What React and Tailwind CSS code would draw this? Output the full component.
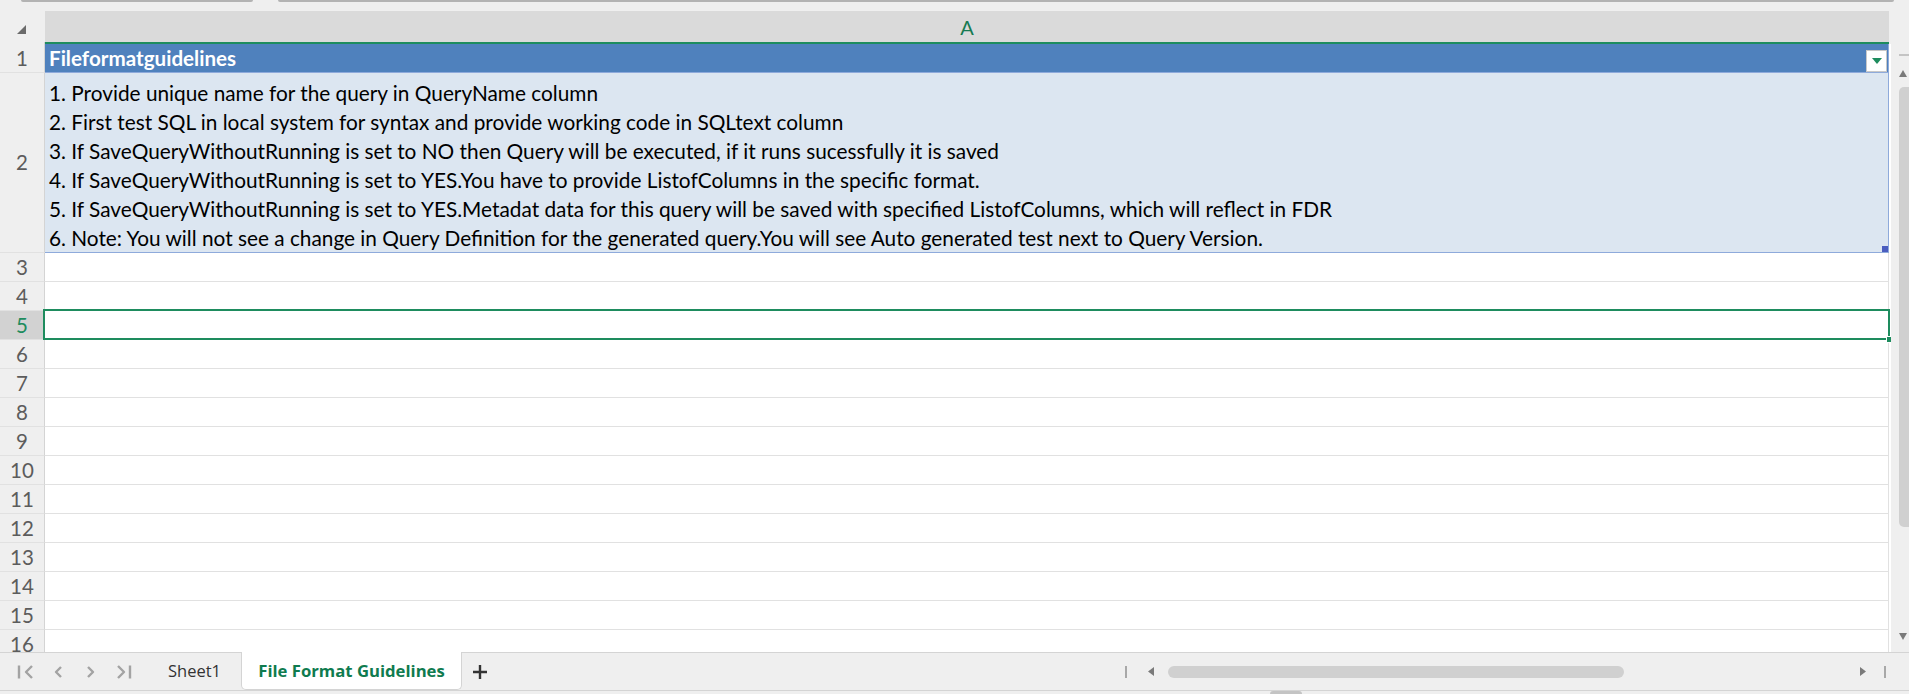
import React from "react";

const GREEN = "border-[#1e8c5e]";

const guideLines = [
  "1. Provide unique name for the query in QueryName column",
  "2. First test SQL in local system for syntax and provide working code in SQLtext column",
  "3. If SaveQueryWithoutRunning is set to NO then Query will be executed, if it runs sucessfully it is saved",
  "4. If SaveQueryWithoutRunning is set to YES.You have to provide ListofColumns in the specific format.",
  "5. If SaveQueryWithoutRunning is set to YES.Metadat data for this query will be saved with specified ListofColumns, which will reflect in FDR",
  "6. Note: You will not see a change in Query Definition for the generated query.You will see Auto generated test next to Query Version.",
];

function RowHeader({ n, active, className = "" }) {
  return (
    <div
      className={`w-[45px] shrink-0 flex items-center justify-center border-r border-[#d4d4d4] text-[20.5px] ${
        active ? "bg-[#d2d2d2] text-[#1e8c5e]" : "bg-[#efefef] text-[#5c5c5c]"
      } ${className}`}
    >
      {n}
    </div>
  );
}

function EmptyRow({ n }) {
  const active = n === 5;
  return (
    <div className="flex h-[29px] shrink-0">
      <RowHeader n={n} active={active} className="border-b border-b-[#e1e1e1]" />
      <div className="relative w-[1844px] border-b border-r border-[#e1e1e1] bg-white">
        {active && (
          <div className={`absolute z-10 -top-[2px] -left-[2px] -right-[2px] bottom-[-1px] border-[2.5px] ${GREEN}`}>
            <div className="absolute -right-[5px] -bottom-[5px] w-[7px] h-[7px] bg-[#1e8c5e] border border-white" />
          </div>
        )}
      </div>
      <div className="flex-1 bg-white" />
    </div>
  );
}

export default function App() {
  const rows = [3, 4, 5, 6, 7, 8, 9, 10, 11, 12, 13, 14, 15, 16];
  return (
    <div className="w-[1909px] h-[694px] overflow-hidden bg-[#efefef] flex flex-col font-['Lato','Liberation_Sans',sans-serif]">
      {/* top strip */}
      <div className="h-[11px] shrink-0 flex items-start">
        <div className="ml-[21px] w-[232px] h-[2px] bg-[#b3b3b3] rounded-b" />
        <div className="ml-[25px] w-[1616px] h-[2px] bg-[#b3b3b3] rounded-b" />
      </div>

      <div className="flex h-[641px] shrink-0">
        {/* grid */}
        <div className="w-[1891px] flex flex-col overflow-hidden">
          {/* column header */}
          <div className="flex h-[31px] shrink-0">
            <div className="w-[45px] shrink-0 flex items-end pb-[8px] pl-[17px]">
              <svg width="9" height="9" viewBox="0 0 9 9">
                <polygon points="9,0 9,9 0,9" fill="#6b6b6b" />
              </svg>
            </div>
            <div className="w-[1844px] bg-[#dadada] flex items-center justify-center text-[20px] text-[#177a52]">A</div>
          </div>
          <div className="flex h-[2px] shrink-0">
            <div className="w-[45px] bg-[#efefef] border-r border-[#d4d4d4]" />
            <div className="w-[1844px] bg-[#1e8c5e]" />
          </div>

          {/* row 1 */}
          <div className="flex h-[29px] shrink-0">
            <RowHeader n={1} className="border-b border-b-[#e1e1e1]" />
            <div className="w-[1844px] bg-[#4f81bd] border-b border-r border-[#8eaadb] flex items-end justify-between pl-[4px] pr-[1px]">
              <span className="self-center text-white font-bold text-[20.6px]">Fileformatguidelines</span>
              <div className="w-[21px] h-[22px] bg-white border border-[#c8c8c8] flex items-center justify-center">
                <svg width="10" height="6" viewBox="0 0 10 6">
                  <polygon points="0,0 10,0 5,6" fill="#1e8c5e" />
                </svg>
              </div>
            </div>
            <div className="flex-1 bg-white" />
          </div>

          {/* row 2 */}
          <div className="flex h-[180px] shrink-0">
            <RowHeader n={2} className="border-b border-b-[#e1e1e1]" />
            <div className="relative w-[1844px] bg-[#dce6f1] border-b border-r border-[#8eaadb] flex flex-col justify-end pl-[4px] text-[20.8px] leading-[29px] text-black">
              {guideLines.map((l) => (
                <div key={l} className="whitespace-nowrap">{l}</div>
              ))}
              <div className="absolute right-0 bottom-0 w-[6px] h-[6px] bg-[#4a5dbf]" />
            </div>
            <div className="flex-1 bg-white" />
          </div>

          {rows.map((n) => (
            <EmptyRow key={n} n={n} />
          ))}
        </div>

        {/* vertical scrollbar */}
        <div className="flex-1 flex flex-col items-end pt-[43px] pb-[12px]">
          <div className="w-[10px] h-[2px] bg-[#c4c4c4]" />
          <div className="mt-[14px] mr-[2px]">
            <svg width="8" height="7" viewBox="0 0 8 7">
              <polygon points="4,0 8,7 0,7" fill="#7a7a7a" />
            </svg>
          </div>
          <div className="mt-[10px] w-[10px] h-[440px] bg-[#d0d0d0] rounded-l-[5px]" />
          <div className="mt-auto mr-[2px]">
            <svg width="8" height="7" viewBox="0 0 8 7">
              <polygon points="0,0 8,0 4,7" fill="#7a7a7a" />
            </svg>
          </div>
        </div>
      </div>

      {/* sheet tab bar */}
      <div className="h-[39px] shrink-0 border-t border-[#d4d4d4] border-b flex items-stretch font-['Open_Sans','Liberation_Sans',sans-serif]">
        <div className="flex items-center w-[150px]">
          <svg className="ml-[17px]" width="17" height="16" viewBox="0 0 17 16" fill="none" stroke="#a3a3a3" strokeWidth="2.4" strokeLinejoin="round">
            <path d="M2 1.5v13M15 2l-6 6 6 6" />
          </svg>
          <svg className="ml-[19px]" width="10" height="16" viewBox="0 0 10 16" fill="none" stroke="#a3a3a3" strokeWidth="2.4" strokeLinejoin="round">
            <path d="M8 3l-5 5 5 5" />
          </svg>
          <svg className="ml-[23px]" width="10" height="16" viewBox="0 0 10 16" fill="none" stroke="#a3a3a3" strokeWidth="2.4" strokeLinejoin="round">
            <path d="M2 3l5 5-5 5" />
          </svg>
          <svg className="ml-[20px]" width="16" height="16" viewBox="0 0 16 16" fill="none" stroke="#a3a3a3" strokeWidth="2.4" strokeLinejoin="round">
            <path d="M2 2l6 6-6 6M14 1.5v13" />
          </svg>
        </div>
        <div className="flex items-center pl-[18px] w-[91px] text-[16.5px] text-[#333]">Sheet1</div>
        <div className="-mt-px flex items-center justify-center w-[221px] bg-white rounded-b-[5px] border border-t-0 border-[#d4d4d4] text-[16.7px] font-bold text-[#0f7b4f]">
          File Format Guidelines
        </div>
        <div className="flex items-center pl-[11px] w-[663px]">
          <svg width="14" height="14" viewBox="0 0 14 14" stroke="#333" strokeWidth="2.4">
            <path d="M7 0v14M0 7h14" />
          </svg>
        </div>
        <div className="flex items-center flex-1">
          <div className="w-[2px] h-[12px] bg-[#a8a8a8]" />
          <svg className="ml-[21px]" width="6" height="9" viewBox="0 0 6 9">
            <polygon points="6,0 6,9 0,4.5" fill="#7a7a7a" />
          </svg>
          <div className="ml-[14px] w-[456px] h-[12px] rounded-full bg-[#d0d0d0]" />
          <svg className="ml-[236px]" width="6" height="9" viewBox="0 0 6 9">
            <polygon points="0,0 6,4.5 0,9" fill="#7a7a7a" />
          </svg>
          <div className="ml-[18px] w-[2px] h-[12px] bg-[#a8a8a8]" />
        </div>
      </div>
      <div className="flex-1 flex">
        <div className="ml-[1270px] w-[32px] h-[3px] bg-[#c4c4c4] rounded-t" />
      </div>
    </div>
  );
}
